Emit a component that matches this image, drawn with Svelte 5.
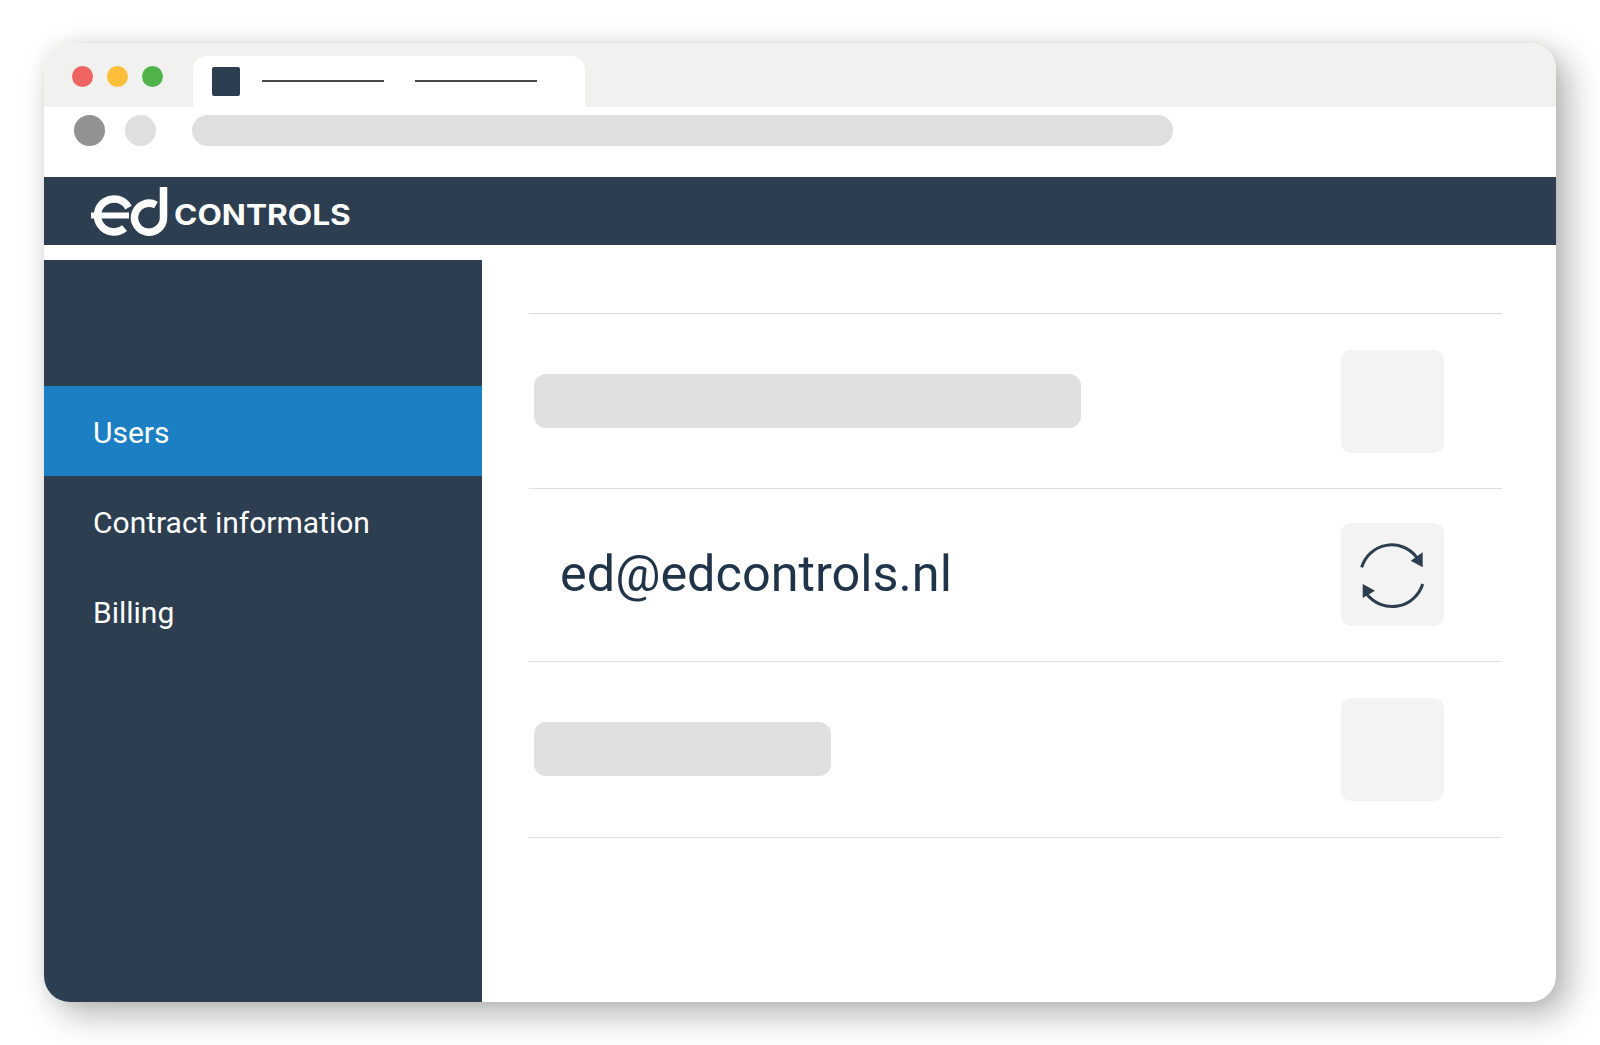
<script>
	let menu = [
		{ label: 'Users', active: true },
		{ label: 'Contract information', active: false },
		{ label: 'Billing', active: false }
	];
</script>

<div class="page">
	<div class="window">
		<div class="tabbar">
			<div class="dots">
				<span class="dot red"></span>
				<span class="dot yellow"></span>
				<span class="dot green"></span>
			</div>
			<div class="tab">
				<span class="favicon"></span>
				<span class="tab-line"></span>
				<span class="tab-line"></span>
			</div>
		</div>
		<div class="toolbar">
			<span class="nav dark"></span>
			<span class="nav light"></span>
			<span class="address"></span>
		</div>
		<header class="brand">
			<svg class="mark" viewBox="0 0 80 52" width="80" height="52" aria-hidden="true">
				<g fill="none" stroke="#fff" stroke-width="7.5">
					<path d="M33.6 41.1 A 16.5 16.5 0 1 1 37.5 20.6" />
					<path d="M0 28.5 H 38" stroke-width="6" />
					<path d="M72.5 0 V 30.5 A 14.5 14.5 0 1 1 65 18" />
				</g>
			</svg>
			<span class="wordmark">CONTROLS</span>
		</header>
		<div class="body">
			<nav class="sidebar">
				{#each menu as item}
					<div class="item" class:active={item.active}>{item.label}</div>
				{/each}
			</nav>
			<main class="content">
				<div class="row first">
					<span class="bar long"></span>
					<span class="square"></span>
				</div>
				<div class="row middle">
					<span class="email">ed@edcontrols.nl</span>
					<span class="square">
						<svg viewBox="0 0 103 103" width="103" height="103" aria-hidden="true">
							<g fill="none" stroke="#2c3e50" stroke-width="3">
								<path d="M20.7 44.3 A 31.3 31.3 0 0 1 75.7 34.3" />
								<path d="M81.7 61 A 32 32 0 0 1 25.7 71" />
							</g>
							<path fill="#2c3e50" d="M69.7 37.7 L81.7 29.3 V44.3 Z M21.7 61 L34 67.7 L21.7 75 Z" />
						</svg>
					</span>
				</div>
				<div class="row last">
					<span class="bar short"></span>
					<span class="square"></span>
				</div>
			</main>
		</div>
	</div>
</div>

<style>
	:global(body) {
		margin: 0;
		background: #fff;
	}

	.page {
		width: 1600px;
		height: 1045px;
		padding: 43px 44px;
		box-sizing: border-box;
		overflow: hidden;
		font-family: Roboto, sans-serif;
	}

	.window {
		height: 959px;
		border-radius: 26px;
		overflow: hidden;
		background: #fff;
		display: flex;
		flex-direction: column;
		box-shadow: 12px 12px 34px rgba(0, 0, 0, 0.3), 0 0 14px rgba(0, 0, 0, 0.06);
	}

	.tabbar {
		height: 64px;
		flex: none;
		background: #f1f1ef;
		display: flex;
		align-items: flex-start;
	}

	.dots {
		display: flex;
		gap: 14px;
		margin: 23px 0 0 28px;
	}

	.dot {
		width: 21px;
		height: 21px;
		border-radius: 50%;
	}
	.red { background: #ee6460; }
	.yellow { background: #fdbf39; }
	.green { background: #51b44b; }

	.tab {
		margin: 13px 0 0 30px;
		width: 392px;
		height: 51px;
		background: #fff;
		border-radius: 14px 14px 0 0;
		display: flex;
		align-items: flex-start;
		box-sizing: border-box;
		padding: 11px 0 0 19px;
	}

	.favicon {
		width: 28px;
		height: 29px;
		background: #2c3e50;
		border-radius: 2px;
		margin-right: 22px;
	}

	.tab-line {
		width: 122px;
		height: 2px;
		background: #4a4a4a;
		margin: 13px 31px 0 0;
	}

	.toolbar {
		height: 70px;
		flex: none;
		display: flex;
		align-items: flex-start;
		padding: 8px 0 0 30px;
		box-sizing: border-box;
	}

	.nav {
		width: 31px;
		height: 31px;
		border-radius: 50%;
	}
	.dark { background: #929292; margin-right: 20px; }
	.light { background: #dfdfdf; margin-right: 36px; }

	.address {
		width: 981px;
		height: 31px;
		border-radius: 16px;
		background: #dfdfdf;
	}

	.brand {
		height: 68px;
		flex: none;
		background: #2c3e50;
		display: flex;
		align-items: flex-start;
		padding-left: 47px;
		box-sizing: border-box;
	}

	.mark {
		margin-top: 10px;
		flex: none;
	}

	.wordmark {
		margin: 22px 0 0 3px;
		font-family: Inter, sans-serif;
		font-weight: 700;
		font-size: 28px;
		line-height: 32px;
		color: #fff;
		transform: scaleX(1.13);
		transform-origin: left center;
	}

	.body {
		flex: 1;
		display: flex;
		margin-top: 15px;
		min-height: 0;
	}

	.sidebar {
		width: 438px;
		flex: none;
		background: #2c3e50;
		padding-top: 126px;
		box-sizing: border-box;
	}

	.item {
		height: 90px;
		line-height: 94px;
		padding-left: 49px;
		font-size: 30px;
		color: #fff;
	}

	.item.active {
		background: #1c7fc4;
	}

	.content {
		flex: 1;
		padding: 53px 54px 0 47px;
	}

	.row {
		display: flex;
		align-items: center;
		justify-content: space-between;
		border-bottom: 1px solid #e0e0e0;
		box-sizing: border-box;
		padding: 0 58px 0 5px;
	}

	.row.first {
		border-top: 1px solid #d9d9d9;
		height: 176px;
	}

	.row.middle {
		height: 173px;
		padding-bottom: 2px;
	}

	.row.last {
		height: 176px;
		padding-bottom: 1px;
	}

	.bar {
		height: 54px;
		border-radius: 12px;
		background: #e0e0e0;
	}
	.long { width: 547px; }
	.short { width: 297px; }

	.square {
		width: 103px;
		height: 103px;
		border-radius: 10px;
		background: #f3f3f3;
		flex: none;
	}

	.square svg {
		display: block;
	}

	.email {
		margin: -2px 0 0 26px;
		font-size: 50.4px;
		font-weight: 400;
		color: #1f3349;
	}
</style>
